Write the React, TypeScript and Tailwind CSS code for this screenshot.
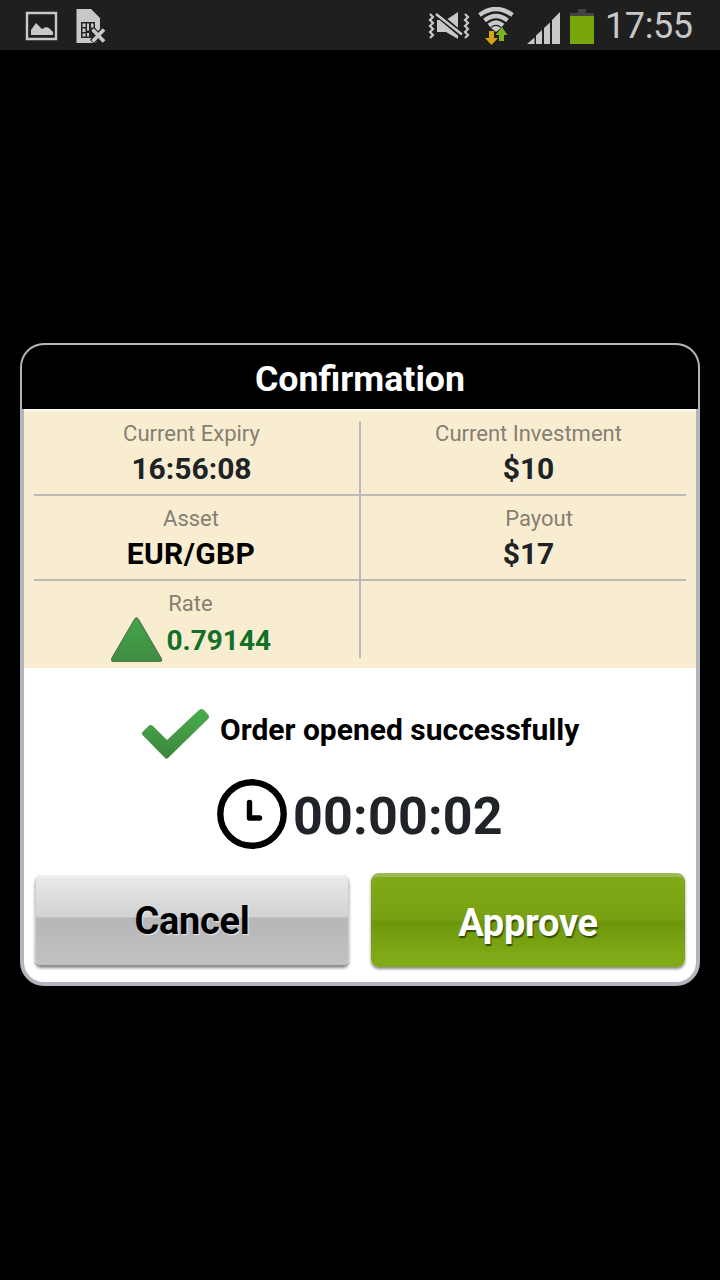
import type { ReactNode } from "react";

function StatusBar() {
  return (
    <header className="flex h-[50px] items-start bg-[#1f1f1f] text-[#c8c8c8]">
      {/* Notifications */}
      <svg className="ml-[25px] mt-[11px] h-[30px] w-[33px]" viewBox="0 0 33 30">
        <path d="M2 2H31V28H2Z" fill="none" stroke="currentColor" strokeWidth="2.4" />
        <path d="M6 24V19L11 12L17 18L21 16L24 17L28 21V24Z" fill="currentColor" />
      </svg>
      <svg className="ml-[18px] mt-[8px] h-[36px] w-[30px]" viewBox="0 0 30 36">
        <path d="M0.500 1H15L24 10V22L20 35H0.500Z" fill="currentColor" />
        <path d="M5 14H19V30H5Z" fill="#252525" />
        <path
          d="M6.500 15.500h3v3.500h-3zM11 15.500h2v7h-2zM6.500 20.500h3v3.500h-3zM6.500 25.500h3v3h-3zM11 25h2v3.500h-2zM15 15.500h2.500v4H15z"
          fill="currentColor"
        />
        <path d="M16 21L28 34M28 21L16 34" stroke="#1f1f1f" strokeWidth="6" />
        <path d="M16.500 21.500L28 33.500M28 21.500L16.500 33.500" stroke="currentColor" strokeWidth="3.600" />
      </svg>

      {/* System icons */}
      <svg className="ml-[322px] mt-[10px] h-[32px] w-[42px]" viewBox="0 0 42 32">
        <path
          d="M2 4L5 7L2 10L5 13L2 16L5 19L2 22L5 25L2 28M37 4L40 7L37 10L40 13L37 16L40 19L37 22L40 25L37 28"
          fill="none"
          stroke="currentColor"
          strokeWidth="2.200"
        />
        <path d="M9 10H13L30 24V29L18 22H9ZM18 10L30 2V19Z" fill="currentColor" />
        <path d="M9 4L34 25" stroke="#1f1f1f" strokeWidth="6" />
        <path d="M8 4L34 24.500" stroke="currentColor" strokeWidth="2.600" />
      </svg>
      <svg className="ml-[8px] mt-[7px] h-[38px] w-[36px]" viewBox="0 0 36 38">
        <path
          d="M1.500 8Q18-4 34.500 8M6.500 13.500Q18 4.500 29.500 13.500M11 18.500Q18 12.500 25 18.500"
          fill="none"
          stroke="currentColor"
          strokeWidth="4.400"
        />
        <path d="M13 21Q18 17 23 21L18 25Z" fill="currentColor" />
        <path d="M11 24H16V31H20L13.500 38L7 31H11Z" fill="#d5a514" />
        <path d="M21 34V28H17.500L24 20L29.500 28H26V34Z" fill="#7eb51c" />
      </svg>
      <svg className="ml-[13px] mt-[11px] h-[33px] w-[34px]" viewBox="0 0 34 33">
        <path
          d="M0 33L7.500 26.500V33ZM9 33V24.500L15 19V33ZM17 33V17L23 11.500V33ZM25 33V9L33 1V33Z"
          fill="currentColor"
        />
      </svg>
      <svg className="ml-[9px] mt-[9px] h-[35px] w-[24px]" viewBox="0 0 24 35">
        <path d="M8 0H16V4H24V7H0V4H8Z" fill="#444" />
        <path d="M0 7H24V35H0Z" fill="#77a50b" />
      </svg>
      <time className="ml-[11px] mt-[5px] text-[36px] leading-[42px] tracking-[-0.4px]">17:55</time>
    </header>
  );
}

function Label({ children }: { children: ReactNode }) {
  return <div className="text-[22px] leading-[26px] text-[#858071]">{children}</div>;
}

function Details() {
  return (
    <section className="flex h-[259px] border-t-2 border-[#fffdf4] bg-[#f8edd1] px-[10px] pt-[10px] text-center">
      <div className="h-[237px] w-[325px]">
        <div className="h-[75px] border-b-2 border-[#bebbb7] pr-[10px]">
          <Label>Current Expiry</Label>
          <div className="pt-[4px] text-[30px] font-bold leading-[36px] text-[#202326]">16:56:08</div>
        </div>
        <div className="h-[85px] border-b-2 border-[#bebbb7] pr-[11px] pt-[10px]">
          <Label>Asset</Label>
          <div className="pt-[4px] text-[30px] font-bold leading-[36px] tracking-[0.400px] text-black">EUR/GBP</div>
        </div>
        <div className="pt-[10px]">
          <div className="pr-[12px]">
            <Label>Rate</Label>
          </div>
          <div className="flex pl-[76px] text-[28px] font-bold leading-[36px] text-[#127028]">
            <svg className="h-[46px] w-[53px]" viewBox="0 0 53 46">
              <defs>
                <linearGradient id="rise" x2="0" y2="1">
                  <stop stopColor="#41a64a" />
                  <stop offset="1" stopColor="#408c42" />
                </linearGradient>
              </defs>
              <path
                d="M24.500 2.500Q26.500-1 28.500 2.500L51 41Q53 44.500 49.500 44.500H4Q0.500 44.500 2 41Z"
                fill="url(#rise)"
                stroke="#4f7844"
                strokeWidth="1.200"
              />
            </svg>
            <span className="ml-[3.5px] mt-[6px]">0.79144</span>
          </div>
        </div>
      </div>
      <div className="h-[237px] w-[2px] bg-[#bebbb7]" />
      <div className="h-[237px] w-[325px]">
        <div className="h-[75px] border-b-2 border-[#bebbb7] pl-[10px]">
          <Label>Current Investment</Label>
          <div className="pt-[4px] text-[30px] font-bold leading-[36px] text-[#202326]">$10</div>
        </div>
        <div className="h-[85px] border-b-2 border-[#bebbb7] pl-[10px] pt-[10px]">
          <div className="pl-[21px]">
            <Label>Payout</Label>
          </div>
          <div className="pt-[4px] text-[30px] font-bold leading-[36px] text-[#202326]">$17</div>
        </div>
      </div>
    </section>
  );
}

function Result() {
  return (
    <section className="h-[205px] pt-[40px]">
      <div className="flex">
        <svg className="ml-[117px] h-[52px] w-[70px]" viewBox="0 0 70 52">
          <defs>
            <linearGradient id="tick" x2="0" y2="1">
              <stop stopColor="#49ad4d" />
              <stop offset="1" stopColor="#3c853d" />
            </linearGradient>
          </defs>
          <path
            d="M1.500 24L8 17.500Q10 16.500 12 18L26 32L58 2Q60.500 0 63 2L67.500 7Q69 9 67 11L27 50Q25.500 51.500 24 50L1.500 27Q0 25.500 1.500 24Z"
            fill="url(#tick)"
          />
        </svg>
        <p className="ml-[9px] mt-[4px] whitespace-nowrap text-[30px] font-bold leading-[36px] text-black">
          Order opened successfully
        </p>
      </div>
      <div className="flex pt-[19px]">
        <svg
          className="ml-[193px] h-[70px] w-[70px]"
          viewBox="0 0 70 70"
          fill="none"
          stroke="#000"
          strokeLinecap="round"
          strokeLinejoin="round"
        >
          <circle cx="35" cy="35" r="31.700" strokeWidth="6.400" />
          <path d="M32.500 23.500V39H42.500" strokeWidth="5.400" />
        </svg>
        <div className="ml-[6px] mt-[8px] text-[52px] font-bold leading-[60px] tracking-[0.200px] text-[#202428]">
          00:00:02
        </div>
      </div>
    </section>
  );
}

export default function App() {
  return (
    <main className="h-[1280px] w-[720px] overflow-hidden bg-black font-[Roboto,sans-serif]">
      <StatusBar />
      <div className="mx-5 mt-[293px] h-[643px] overflow-hidden rounded-[24px] bg-[#b1b6be]">
        <h1 className="mx-[2px] mt-[2px] h-[64px] rounded-t-[22px] bg-black pt-[13px] text-center text-[35.7px] font-bold leading-[42px] text-white">
          Confirmation
        </h1>
        <div className="mx-[4px] h-[573px] overflow-hidden rounded-b-[20px] bg-white">
          <Details />
          <Result />
          <div className="flex gap-[22px] px-[11px]">
            <button
              type="button"
              className="mt-[2px] h-[90px] w-[314px] rounded-[6px] border-x border-[#d2d2d4] bg-[linear-gradient(#f4f4f4_0px,#e8e8e8_4px,#d0d1d2_42px,#b6b6b8_43px,#c1c1c3_90px)] pt-[3px] text-[38px] font-bold tracking-[-0.300px] text-black shadow-[0_3px_3px_#888] [text-shadow:1px_1px_1px_#eee]"
            >
              Cancel
            </button>
            <button
              type="button"
              className="h-[94px] w-[314px] rounded-[8px] border-t-4 border-[#9db957] bg-[linear-gradient(#80aa17_0%,#78a013_48%,#6d960b_49%,#80aa17_88%)] pt-[2px] text-[38px] font-bold tracking-[-0.300px] text-white shadow-[0_2px_3px_#888] [text-shadow:1px_2px_1px_#344a08]"
            >
              Approve
            </button>
          </div>
        </div>
      </div>
    </main>
  );
}
